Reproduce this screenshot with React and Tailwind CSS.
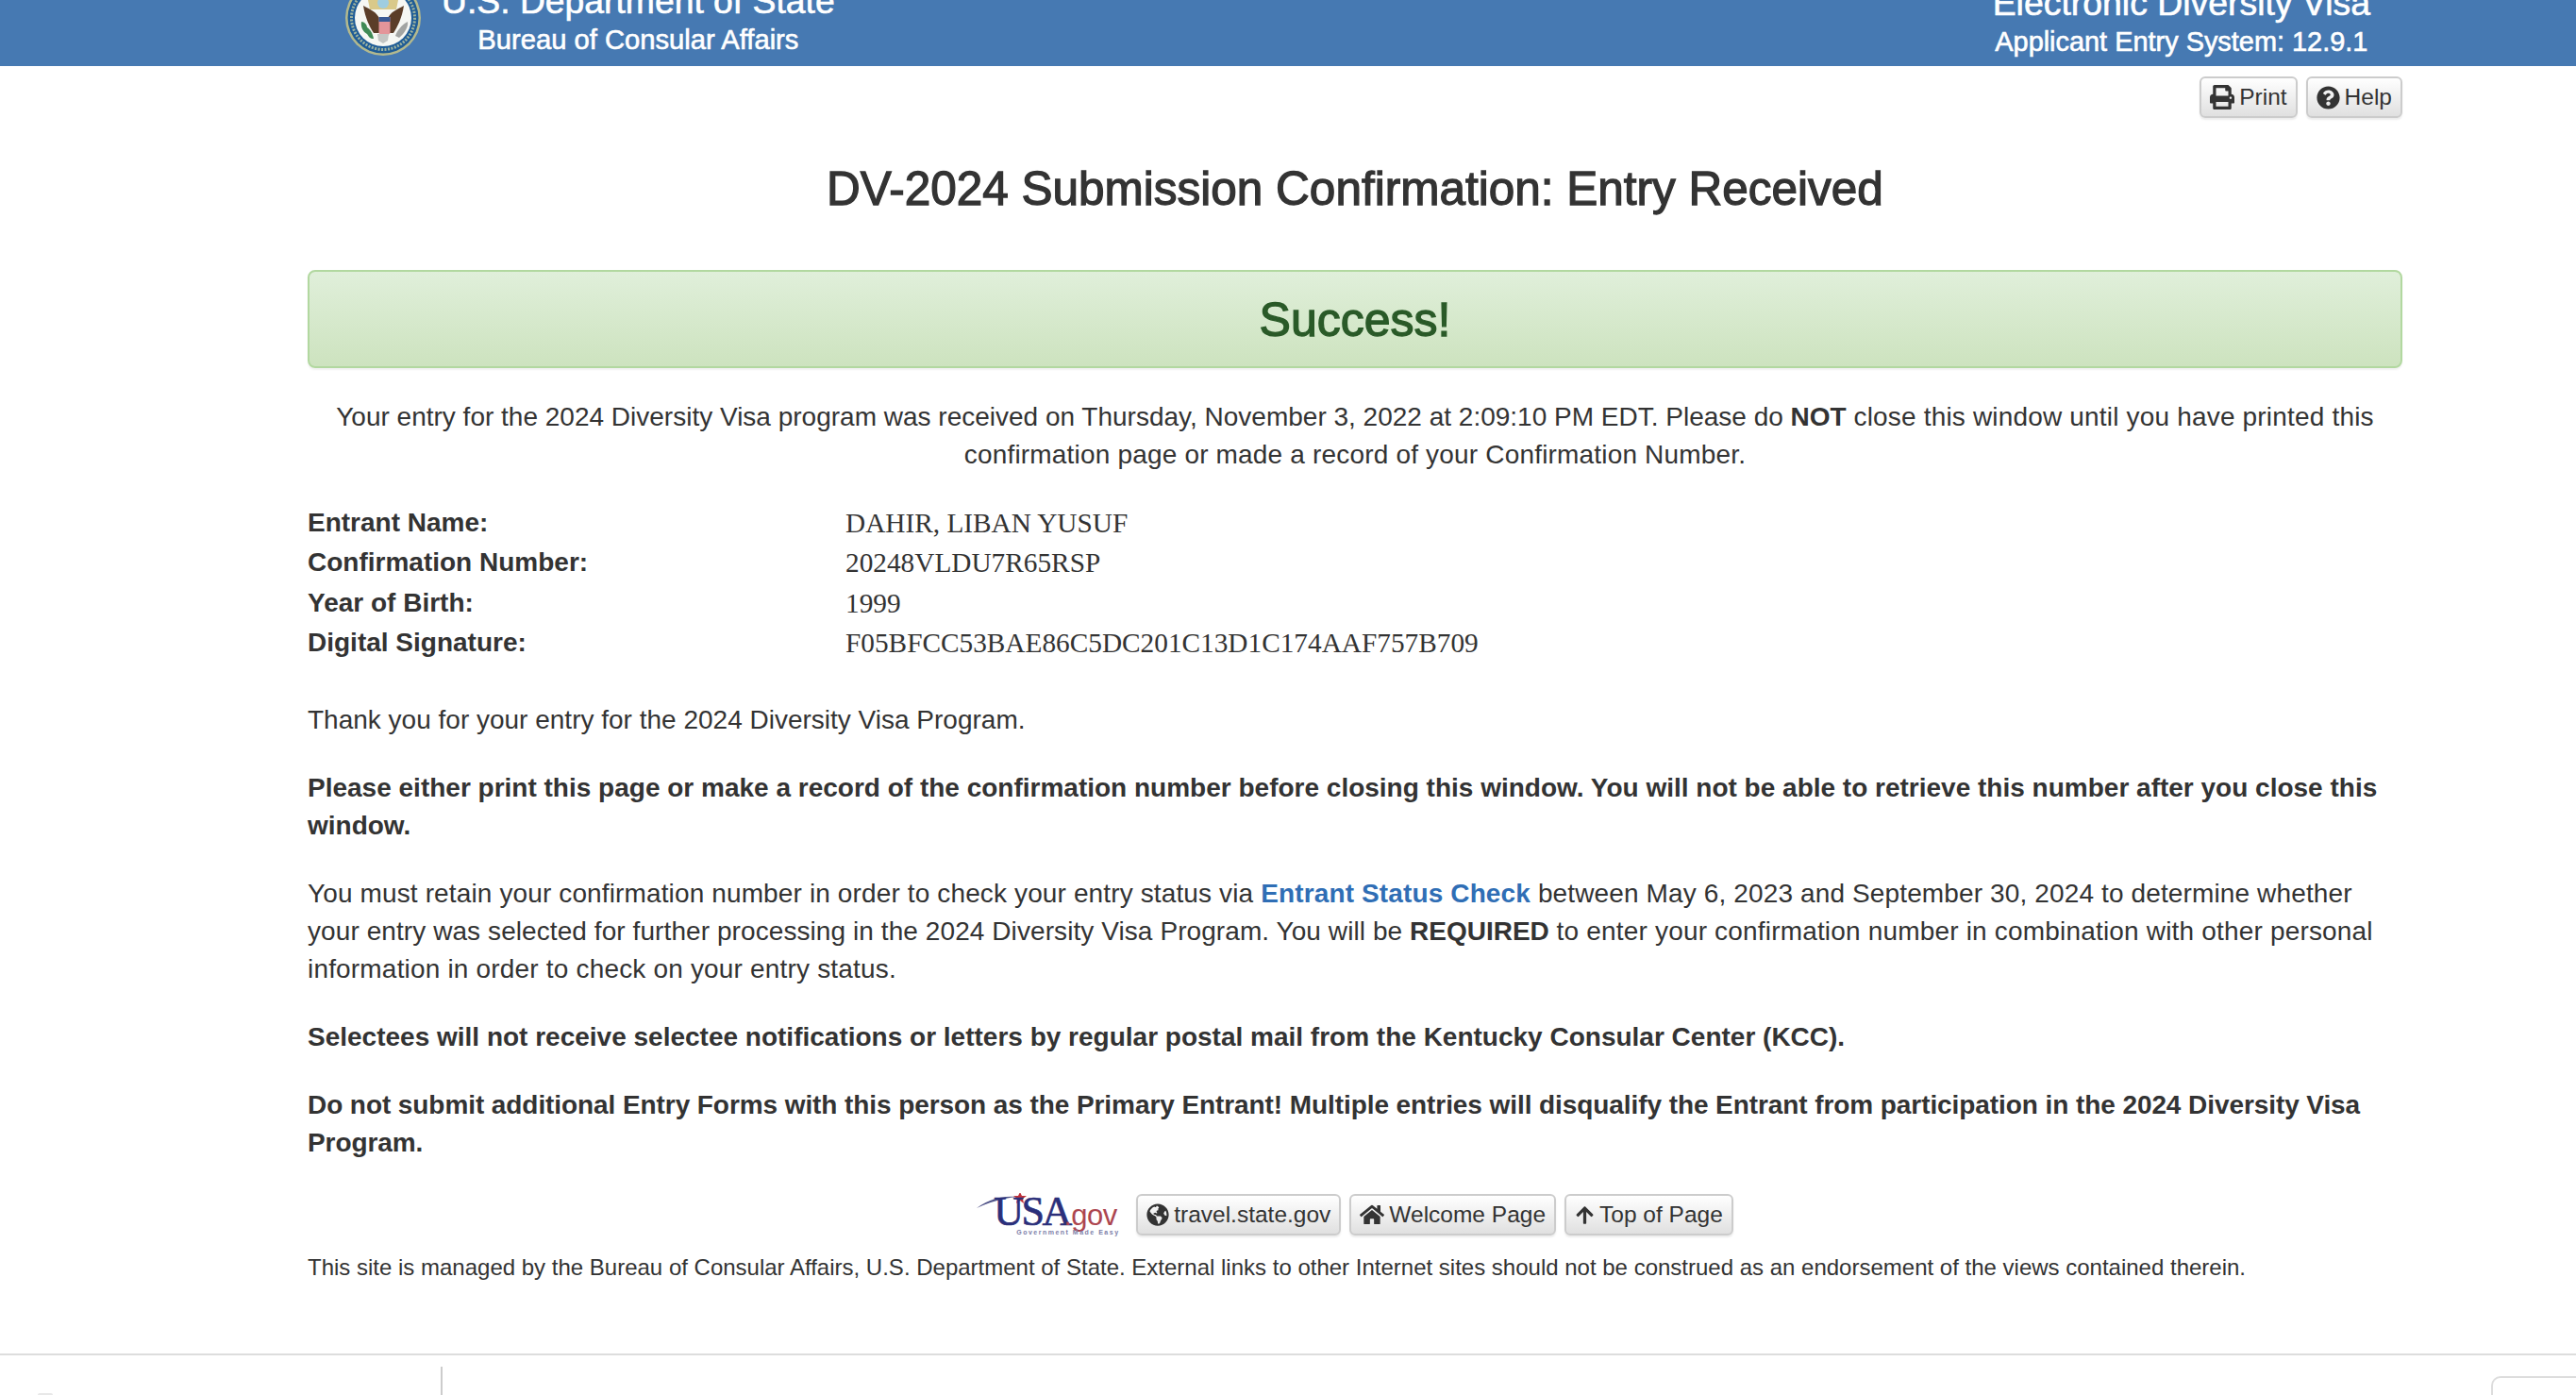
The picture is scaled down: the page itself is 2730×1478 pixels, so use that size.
import React from "react";
import { FaPrint, FaQuestionCircle, FaGlobeAmericas, FaHome, FaArrowUp } from "react-icons/fa";

function Seal() {
  return (
    <svg width="80" height="80" viewBox="0 0 80 80" className="shrink-0">
      <circle cx="40" cy="40" r="40" fill="#b3b98e" />
      <circle cx="40" cy="40" r="37.5" fill="#1f5c96" />
      <circle cx="40" cy="40" r="33.5" fill="none" stroke="#9fb4a0" strokeWidth="3" strokeDasharray="2 1.5" />
      <circle cx="40" cy="40" r="30" fill="#f6f7f3" />
      <path d="M24 21h32l-2 10H26z" fill="#d9c98a" />
      <circle cx="40" cy="24" r="6" fill="#9fcde0" />
      <path d="M19 27 C26 31 33 33 37 42 L36 56 L30 56 C26 50 21 40 19 27Z" fill="#5b3d28" />
      <path d="M62 27 C55 31 48 33 44 42 L45 56 L51 56 C55 50 60 40 62 27Z" fill="#5b3d28" />
      <path d="M35.5 39h12v17c-2 3-4 3.5-6 4-2-.5-4-1-6-4z" fill="#e4959a" />
      <path d="M35.5 39h12v5h-12z" fill="#3a5a94" />
      <path d="M17 44c3 0 6 3 6 6 3 2 6 6 7 12-4 0-5-2-7-5-4-2-7-7-6-13z" fill="#3f8a55" />
      <path d="M66 44c1 5-3 12-9 17l-4-2c2-6 7-12 13-15z" fill="#a3a5a3" />
      <path d="M34 57h12l-1 7-5 3-5-3z" fill="#c4c6c4" />
    </svg>
  );
}

function UsaGov() {
  return (
    <div className="relative h-[46px] w-[160px] shrink-0" style={{ fontFamily: '"Liberation Serif", serif' }}>
      <svg width="160" height="46" viewBox="0 0 160 46" className="absolute left-0 top-0">
        <path d="M0 16 C12 7 26 3 42 4 C26 6 12 10 0 16Z" fill="#4f5288" />
        <path d="M46 -1l2 4 5 0-4 3 1 5-4-3-4 3 1-5-4-3 5 0z" fill="#c0323a" />
      </svg>
      <span className="absolute left-[18px] top-[-2px] text-[44px] leading-[44px] tracking-[-2.5px] text-[#2b2f7a] [-webkit-text-stroke:0.7px]">USA</span>
      <span className="absolute left-[92px] top-[6px] text-[31px] leading-[36px] tracking-[-0.5px] text-[#ad4650]" style={{ fontFamily: '"Liberation Sans", sans-serif' }}>.gov</span>
      <span className="absolute left-[42px] top-[38px] whitespace-nowrap text-[7px] leading-[8px] font-bold tracking-[1.5px] text-[#7c7ea8]" style={{ fontFamily: '"Liberation Sans", sans-serif' }}>Government Made Easy</span>
    </div>
  );
}

function Btn({ icon, children }) {
  return (
    <div className="flex h-[44px] items-center gap-[5px] rounded-[6px] border-2 border-[#ccc] bg-linear-to-b from-white to-[#e0e0e0] px-[9px] text-[24.5px] leading-none text-[#333] shadow-[0_2px_2px_rgba(0,0,0,0.08)]">
      {icon}
      <span>{children}</span>
    </div>
  );
}

function Row({ label, value }) {
  return (
    <div className="flex h-[42.3px] items-center">
      <div className="w-[570px] font-bold">{label}</div>
      <div className="text-[29.3px]" style={{ fontFamily: '"Liberation Serif", serif' }}>{value}</div>
    </div>
  );
}

export default function App() {
  return (
    <div className="h-[1478px] overflow-hidden bg-white text-[28px] leading-[40px] text-[#333]" style={{ fontFamily: '"Liberation Sans", Arial, sans-serif' }}>
      <header className="flex h-[70px] items-end justify-between overflow-hidden bg-[#4679b2] pl-[366px] pr-[218px] text-white">
        <div className="flex items-end gap-[22px]">
          <div className="mb-[11px]"><Seal /></div>
          <div className="mb-[7px] flex flex-col items-center">
            <div className="text-[37.3px] leading-[40px] whitespace-nowrap [-webkit-text-stroke:0.6px]">U.S. Department of State</div>
            <div className="text-[29.2px] leading-[42px] whitespace-nowrap [-webkit-text-stroke:0.6px]">Bureau of Consular Affairs</div>
          </div>
        </div>
        <div className="mb-[5px] flex flex-col items-center">
          <div className="text-[37.4px] leading-[40px] whitespace-nowrap [-webkit-text-stroke:0.6px]">Electronic Diversity Visa</div>
          <div className="text-[28.9px] leading-[42px] whitespace-nowrap [-webkit-text-stroke:0.6px]">Applicant Entry System: 12.9.1</div>
        </div>
      </header>

      <main className="mx-[326px] w-[2220px]">
        <div className="flex justify-end gap-[9px] pt-[11px]">
          <Btn icon={<FaPrint className="h-[26px] w-[26px]" />}>Print</Btn>
          <Btn icon={<FaQuestionCircle className="h-[25px] w-[25px]" />}>Help</Btn>
        </div>
        <h1 className="mt-[45px] text-center text-[49.5px] leading-[60px] font-normal [-webkit-text-stroke:1.3px]">DV-2024 Submission Confirmation: Entry Received</h1>
        <div className="mt-[56px] flex h-[104px] items-center justify-center rounded-[8px] border-2 border-[#b2d8a0] bg-linear-to-b from-[#e0efda] to-[#cde3bf] pt-[2px] text-[50px] font-normal text-[#2a5a28] shadow-[0_2px_2px_rgba(0,0,0,0.06)] [-webkit-text-stroke:1.3px]">
          Success!
        </div>
        <p className="mt-[32px] text-center">
          Your entry for the 2024 Diversity Visa program was received on Thursday, November 3, 2022 at 2:09:10 PM EDT. Please do <b>NOT</b> <span className="tracking-[0.18px]">close this window until you have printed this confirmation page or made a record of your Confirmation Number.</span>
        </p>
        <div className="mt-[31px]">
          <Row label="Entrant Name:" value="DAHIR, LIBAN YUSUF" />
          <Row label="Confirmation Number:" value="20248VLDU7R65RSP" />
          <Row label="Year of Birth:" value="1999" />
          <Row label="Digital Signature:" value="F05BFCC53BAE86C5DC201C13D1C174AAF757B709" />
        </div>
        <p className="mt-[41px]">Thank you for your entry for the 2024 Diversity Visa Program.</p>
        <p className="mt-[32px] font-bold">Please either print this page or make a record of the confirmation number before closing this window. You will not be able to retrieve this number after you close this window.</p>
        <p className="mt-[32px]"><span className="tracking-[0.13px]">You must retain your confirmation number in order to check your entry status via <a className="font-bold text-[#2f6eb5]">Entrant Status Check</a> between May 6, 2023 and September 30, 2024 to determine whether</span><br /><span className="tracking-[0.08px]">your entry was selected for further processing in the 2024 Diversity Visa Program. You will be</span> <b>REQUIRED</b> <span className="tracking-[0.18px]">to enter your confirmation number in combination with other personal information in order to check on your entry status.</span></p>
        <p className="mt-[32px] font-bold">Selectees will not receive selectee notifications or letters by regular postal mail from the Kentucky Consular Center (KCC).</p>
        <p className="mt-[32px] font-bold tracking-[-0.08px]">Do not submit additional Entry Forms with this person as the Primary Entrant! Multiple entries will disqualify the Entrant from participation in the 2024 Diversity Visa Program.</p>
        <div className="mt-[33px] flex items-center justify-center gap-[9px]">
          <UsaGov />
          <Btn icon={<FaGlobeAmericas className="h-[24px] w-[24px]" />}>travel.state.gov</Btn>
          <Btn icon={<FaHome className="h-[26px] w-[26px]" />}>Welcome Page</Btn>
          <Btn icon={<FaArrowUp className="h-[21px] w-[21px]" />}>Top of Page</Btn>
        </div>
        <p className="mt-[16px] text-[24px] leading-[34px]">This site is managed by the Bureau of Consular Affairs, U.S. Department of State. External links to other Internet sites should not be construed as an endorsement of the views contained therein.</p>
      </main>

      <footer className="mt-[74px] flex h-[44px] items-end justify-between border-t-2 border-[#ddd] pl-[40px]">
        <div className="h-[2px] w-[16px] rounded-t-[3px] bg-[#e8e8e8]" />
        <div className="ml-[411px] h-[30px] w-[2px] bg-[#ccc]" />
        <div className="ml-auto h-[20px] w-[90px] rounded-tl-[10px] border-l-2 border-t-2 border-[#ddd]" />
      </footer>
    </div>
  );
}
